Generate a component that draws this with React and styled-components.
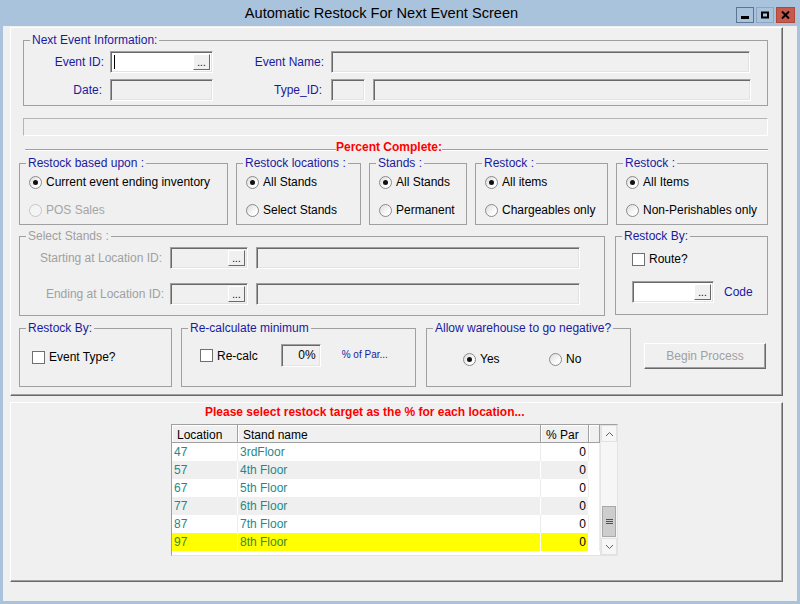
import React from 'react';
import styled, { createGlobalStyle } from 'styled-components';

const stands = [
  { loc: '47', name: '3rdFloor', par: '0' },
  { loc: '57', name: '4th Floor', par: '0' },
  { loc: '67', name: '5th Floor', par: '0' },
  { loc: '77', name: '6th Floor', par: '0' },
  { loc: '87', name: '7th Floor', par: '0' },
  { loc: '97', name: '8th Floor', par: '0', hot: true },
];

function Radio({ checked, disabled, label, w }) {
  return (
    <Option $w={w} $disabled={disabled}>
      <RadioMark $disabled={disabled}>{checked && <RadioDot />}</RadioMark>
      {label}
    </Option>
  );
}

function Check({ label }) {
  return (
    <Option>
      <CheckMark />
      {label}
    </Option>
  );
}

function Lookup({ w, white, caret }) {
  return (
    <LookupBox $w={w} $white={white}>
      <LookupField>{caret && <Caret />}</LookupField>
      <Ellipsis>...</Ellipsis>
    </LookupBox>
  );
}

function StandGrid() {
  return (
    <Grid>
      <Table>
        <HeadCell>Location</HeadCell>
        <HeadCell>Stand name</HeadCell>
        <HeadCell>% Par</HeadCell>
        <HeadCell />
        {stands.map((s, i) => (
          <React.Fragment key={s.loc}>
            <Cell $alt={i % 2 === 1} $hot={s.hot}>{s.loc}</Cell>
            <Cell $alt={i % 2 === 1} $hot={s.hot}>{s.name}</Cell>
            <Cell $alt={i % 2 === 1} $hot={s.hot} $num>{s.par}</Cell>
            <Cell />
          </React.Fragment>
        ))}
      </Table>
      <ScrollBar>
        <ScrollButton>
          <svg width="9" height="6" viewBox="0 0 9 6"><path d="M1 5 L4.5 1.5 L8 5" fill="none" stroke="#606060" strokeWidth="1" /></svg>
        </ScrollButton>
        <Track>
          <Thumb>
            <svg width="7" height="7" viewBox="0 0 7 7"><path d="M0 1.5H7M0 3.5H7M0 5.5H7" stroke="#505050" strokeWidth="1" /></svg>
          </Thumb>
        </Track>
        <ScrollButton>
          <svg width="9" height="6" viewBox="0 0 9 6"><path d="M1 1 L4.5 4.5 L8 1" fill="none" stroke="#606060" strokeWidth="1" /></svg>
        </ScrollButton>
      </ScrollBar>
    </Grid>
  );
}

export default function App() {
  return (
    <Window>
      <GlobalStyle />
      <TitleBar>
        <Title>Automatic Restock For Next Event Screen</Title>
        <WinButtons>
          <WinButton $kind="min">
            <svg width="8" height="8" viewBox="0 0 8 8"><rect x="0" y="5" width="8" height="3" fill="#000" /></svg>
          </WinButton>
          <WinButton $kind="max">
            <svg width="8" height="8" viewBox="0 0 8 8"><path d="M1 1.5H7V6.5H1Z" fill="none" stroke="#000" strokeWidth="2" /></svg>
          </WinButton>
          <WinButton $kind="close">
            <svg width="9" height="8" viewBox="0 0 9 8"><path d="M1 0.5L8 7.5M8 0.5L1 7.5" stroke="#000" strokeWidth="2" /></svg>
          </WinButton>
        </WinButtons>
      </TitleBar>

      <Client>
        <Panel $h={369} $pad="6px 0 0 8px">
          <GroupBox $w={745} $h={72} $ml={4}>
            <Legend>Next Event Information:</Legend>
            <GroupBody $pad="5px 0 0 0" $gap={6}>
              <FieldRow>
                <FieldLabel $w={86} $pr={6}>Event ID:</FieldLabel>
                <Lookup w={103} white caret />
                <FieldLabel $w={118} $pr={7}>Event Name:</FieldLabel>
                <TextBox $w={419} />
              </FieldRow>
              <FieldRow>
                <FieldLabel $w={86} $pr={8}>Date:</FieldLabel>
                <TextBox $w={103} />
                <FieldLabel $w={118} $pr={9}>Type_ID:</FieldLabel>
                <TextBox $w={34} />
                <TextBox $w={378} $ml={8} />
              </FieldRow>
            </GroupBody>
          </GroupBox>

          <Progress />

          <Divider>
            <DividerLine $w={311} />
            <RedText>Percent Complete:</RedText>
            <DividerLine />
          </Divider>

          <BoxRow $mt={3} $h={68} $gap={8}>
            <GroupBox $w={209}>
              <Legend>Restock based upon :</Legend>
              <GroupBody $pad="5px 0 0 9px" $gap={12}>
                <Radio checked label="Current event ending inventory" />
                <Radio disabled label="POS Sales" />
              </GroupBody>
            </GroupBox>
            <GroupBox $w={125}>
              <Legend>Restock locations :</Legend>
              <GroupBody $pad="5px 0 0 9px" $gap={12}>
                <Radio checked label="All Stands" />
                <Radio label="Select Stands" />
              </GroupBody>
            </GroupBox>
            <GroupBox $w={98}>
              <Legend>Stands :</Legend>
              <GroupBody $pad="5px 0 0 9px" $gap={12}>
                <Radio checked label="All Stands" />
                <Radio label="Permanent" />
              </GroupBody>
            </GroupBox>
            <GroupBox $w={133}>
              <Legend>Restock :</Legend>
              <GroupBody $pad="5px 0 0 9px" $gap={12}>
                <Radio checked label="All items" />
                <Radio label="Chargeables only" />
              </GroupBody>
            </GroupBox>
            <GroupBox $w={152}>
              <Legend>Restock :</Legend>
              <GroupBody $pad="5px 0 0 9px" $gap={12}>
                <Radio checked label="All Items" />
                <Radio label="Non-Perishables only" />
              </GroupBody>
            </GroupBox>
          </BoxRow>

          <BoxRow $mt={5} $h={86} $gap={10}>
            <GroupBox $w={586}>
              <Legend $disabled>Select Stands :</Legend>
              <GroupBody $pad="5px 0 0 0" $gap={14}>
                <FieldRow>
                  <FieldLabel $w={150} $pr={8} $disabled>Starting at Location ID:</FieldLabel>
                  <Lookup w={78} />
                  <TextBox $w={324} $ml={8} />
                </FieldRow>
                <FieldRow>
                  <FieldLabel $w={150} $pr={6} $disabled>Ending at Location ID:</FieldLabel>
                  <Lookup w={78} />
                  <TextBox $w={324} $ml={8} />
                </FieldRow>
              </GroupBody>
            </GroupBox>
            <GroupBox $w={153} $h={85}>
              <Legend>Restock By:</Legend>
              <GroupBody $pad="9px 0 0 16px" $gap={14}>
                <Check label="Route?" />
                <FieldRow>
                  <Lookup w={82} white />
                  <NavyText $ml={10}>Code</NavyText>
                </FieldRow>
              </GroupBody>
            </GroupBox>
          </BoxRow>

          <BoxRow $mt={6} $h={65}>
            <GroupBox $w={153}>
              <Legend>Restock By:</Legend>
              <GroupBody $pad="15px 0 0 12px">
                <Check label="Event Type?" />
              </GroupBody>
            </GroupBox>
            <GroupBox $w={235} $ml={9}>
              <Legend>Re-calculate minimum</Legend>
              <GroupBody $pad="10px 0 0 18px">
                <FieldRow>
                  <Check label="Re-calc" />
                  <PercentBox>0%</PercentBox>
                  <NavyText $ml={21} $small>% of Par...</NavyText>
                </FieldRow>
              </GroupBody>
            </GroupBox>
            <GroupBox $w={205} $ml={10}>
              <Legend>Allow warehouse to go negative?</Legend>
              <GroupBody $pad="17px 0 0 36px">
                <FieldRow>
                  <Radio checked label="Yes" w={86} />
                  <Radio label="No" />
                </FieldRow>
              </GroupBody>
            </GroupBox>
            <ProcessButton disabled>Begin Process</ProcessButton>
          </BoxRow>
        </Panel>

        <Panel $h={180} $pad="2px 0 0 160px">
          <Notice>Please select restock target as the % for each location...</Notice>
          <StandGrid />
        </Panel>
      </Client>
    </Window>
  );
}

const GlobalStyle = createGlobalStyle`
  html, body {
    margin: 0;
    padding: 0;
    background: #f0f0f0;
  }
  body {
    font-family: "Liberation Sans", Arial, sans-serif;
    font-size: 12px;
  }
  * {
    box-sizing: border-box;
  }
`;

const Window = styled.div`
  width: 800px;
  height: 604px;
  background: #aac3dd;
  padding: 0 3px 3px;
  display: flex;
  flex-direction: column;
`;

const TitleBar = styled.div`
  height: 26px;
  display: flex;
  padding-right: 2px;
`;

const Title = styled.div`
  flex: 1;
  text-align: center;
  padding: 5px 0 0 24px;
  font-size: 14.6px;
  color: #000;
`;

const WinButtons = styled.div`
  display: flex;
  gap: 2px;
  padding-top: 7px;
`;

const WinButton = styled.div`
  width: ${p => (p.$kind === 'close' ? 19 : 18)}px;
  height: 16px;
  display: flex;
  align-items: center;
  justify-content: center;
  background: ${p => (p.$kind === 'close' ? '#c75a4c' : '#aac3dd')};
  border: 1px solid ${p => (p.$kind === 'close' ? '#b0483a' : p.$kind === 'min' ? '#5d7590' : '#8ea6c2')};
`;

const Client = styled.div`
  flex: 1;
  background: #f0f0f0;
  padding: 1px 0 0 7px;
  display: flex;
  flex-direction: column;
  gap: 6px;
`;

const Panel = styled.div`
  width: 773px;
  height: ${p => p.$h}px;
  padding: ${p => p.$pad};
  border: 1px solid;
  border-color: #fff #696969 #696969 #fff;
  box-shadow: inset -1px -1px 0 #a0a0a0;
  display: flex;
  flex-direction: column;
  align-items: flex-start;
`;

const GroupBox = styled.fieldset`
  margin: 0 0 0 ${p => p.$ml || 0}px;
  padding: 0;
  min-width: 0;
  width: ${p => p.$w}px;
  height: ${p => (p.$h ? `${p.$h}px` : '100%')};
  flex: none;
  border: 1px solid #a0a0a0;
`;

const Legend = styled.legend`
  margin-left: 6px;
  padding: 0 2px;
  font-size: 12px;
  line-height: 12px;
  color: ${p => (p.$disabled ? '#a0a0a0' : '#1a1aa0')};
`;

const GroupBody = styled.div`
  display: flex;
  flex-direction: column;
  padding: ${p => p.$pad};
  gap: ${p => p.$gap || 0}px;
`;

const FieldRow = styled.div`
  display: flex;
  align-items: center;
`;

const FieldLabel = styled.div`
  width: ${p => p.$w}px;
  padding-right: ${p => p.$pr}px;
  text-align: right;
  color: ${p => (p.$disabled ? '#a0a0a0' : '#1a1aa0')};
  flex: none;
`;

const TextBox = styled.div`
  width: ${p => p.$w}px;
  height: 22px;
  margin-left: ${p => p.$ml || 0}px;
  flex: none;
  background: ${p => (p.$white ? '#fff' : '#f0f0f0')};
  border: 1px solid;
  border-color: #a0a0a0 #fff #fff #a0a0a0;
  box-shadow: inset 1px 1px 0 #696969, inset -1px -1px 0 #e3e3e3;
`;

const LookupBox = styled(TextBox)`
  display: flex;
  padding: 2px;
`;

const LookupField = styled.div`
  flex: 1;
  display: flex;
  align-items: center;
  padding-left: 1px;
`;

const Caret = styled.span`
  width: 1px;
  height: 14px;
  background: #000;
`;

const Ellipsis = styled.div`
  width: 17px;
  flex: none;
  background: #f0f0f0;
  border: 1px solid;
  border-color: #fff #696969 #696969 #fff;
  display: flex;
  align-items: flex-end;
  justify-content: center;
  font-size: 10px;
  line-height: 11px;
  color: #000;
  padding-bottom: 1px;
`;

const Progress = styled.div`
  width: 745px;
  height: 18px;
  margin: 12px 0 0 4px;
  border: 1px solid;
  border-color: #b5b5b5 #fff #fff #b5b5b5;
`;

const Divider = styled.div`
  width: 743px;
  height: 13px;
  margin: 5px 0 0 6px;
  display: flex;
  align-items: center;
`;

const DividerLine = styled.div`
  flex: ${p => (p.$w ? `0 0 ${p.$w}px` : '1')};
  margin-top: 4px;
  border-top: 1px solid #a0a0a0;
  border-bottom: 1px solid #fff;
`;

const RedText = styled.div`
  color: #ff0000;
  font-weight: bold;
  font-size: 12px;
  line-height: 13px;
  white-space: nowrap;
`;

const BoxRow = styled.div`
  display: flex;
  align-items: flex-start;
  margin-top: ${p => p.$mt}px;
  height: ${p => p.$h}px;
  gap: ${p => p.$gap || 0}px;
`;

const Option = styled.label`
  display: flex;
  align-items: center;
  gap: 4px;
  height: 16px;
  width: ${p => (p.$w ? `${p.$w}px` : 'auto')};
  flex: none;
  color: ${p => (p.$disabled ? '#a5a5a5' : '#000')};
  white-space: nowrap;
`;

const RadioMark = styled.span`
  width: 13px;
  height: 13px;
  border-radius: 50%;
  border: 1px solid ${p => (p.$disabled ? '#c6c6c6' : '#8a8a8a')};
  background: ${p => (p.$disabled ? '#f4f4f4' : 'linear-gradient(135deg, #dcdcdc, #fdfdfd 70%)')};
  display: flex;
  align-items: center;
  justify-content: center;
  flex: none;
`;

const RadioDot = styled.span`
  width: 5px;
  height: 5px;
  border-radius: 50%;
  background: #111;
`;

const CheckMark = styled.span`
  width: 13px;
  height: 13px;
  border: 1px solid #707070;
  background: #fff;
  flex: none;
`;

const NavyText = styled.span`
  margin-left: ${p => p.$ml || 0}px;
  color: #1a1aa0;
  font-size: ${p => (p.$small ? 10 : 12)}px;
  margin-top: ${p => (p.$small ? -3 : 0)}px;
`;

const PercentBox = styled(TextBox)`
  width: 40px;
  height: 23px;
  margin-left: 23px;
  text-align: right;
  padding-right: 4px;
  line-height: 20px;
  color: #000;
`;

const ProcessButton = styled.button`
  width: 122px;
  height: 26px;
  margin: 21px 0 0 13px;
  flex: none;
  font-family: "Liberation Sans", Arial, sans-serif;
  font-size: 12px;
  color: #a0a0a0;
  background: #f0f0f0;
  border: 1px solid;
  border-color: #fff #696969 #696969 #fff;
  box-shadow: inset -1px -1px 0 #a0a0a0;
  padding: 0;
`;

const Notice = styled.div`
  margin-left: 34px;
  color: #ff0000;
  font-weight: bold;
  font-size: 12px;
  line-height: 14px;
  height: 14px;
  white-space: nowrap;
`;

const Grid = styled.div`
  margin-top: 5px;
  width: 447px;
  height: 132px;
  display: flex;
  background: #fff;
  border: 1px solid;
  border-color: #a0a0a0 #e3e3e3 #e3e3e3 #a0a0a0;
`;

const Table = styled.div`
  width: 428px;
  display: grid;
  grid-template-columns: 66px 303px 48px 11px;
  grid-auto-rows: 18px;
  align-content: start;
`;

const HeadCell = styled.div`
  background: #f0f0f0;
  border-right: 1px solid #a0a0a0;
  border-bottom: 1px solid #a0a0a0;
  box-shadow: inset 1px 1px 0 #fff;
  padding: 2px 0 0 5px;
  line-height: 17px;
  color: #000;
  white-space: nowrap;
  overflow: hidden;
`;

const Cell = styled.div`
  background: ${p => (p.$hot ? '#ffff00' : p.$alt ? '#efefef' : '#fff')};
  border-right: 1px solid ${p => (p.$alt ? '#fff' : '#ececec')};
  color: ${p => (p.$num ? '#000' : p.$hot ? '#3a8a30' : '#1d8a8a')};
  text-align: ${p => (p.$num ? 'right' : 'left')};
  padding: ${p => (p.$num ? '1px 2px 0 0' : '1px 0 0 2px')};
  line-height: 17px;
  white-space: nowrap;
  overflow: hidden;
`;

const ScrollBar = styled.div`
  width: 17px;
  display: flex;
  flex-direction: column;
  background: #f6f6f6;
  border-left: 1px solid #e6e6e6;
`;

const ScrollButton = styled.div`
  height: 17px;
  flex: none;
  display: flex;
  align-items: center;
  justify-content: center;
  background: #f6f6f6;
  border: 1px solid #e2e2e2;
`;

const Track = styled.div`
  flex: 1;
  display: flex;
  flex-direction: column;
  justify-content: flex-end;
  padding-bottom: 1px;
`;

const Thumb = styled.div`
  height: 31px;
  margin: 0 1px;
  background: #cdcdcd;
  border: 1px solid #a8a8a8;
  display: flex;
  align-items: center;
  justify-content: center;
`;
